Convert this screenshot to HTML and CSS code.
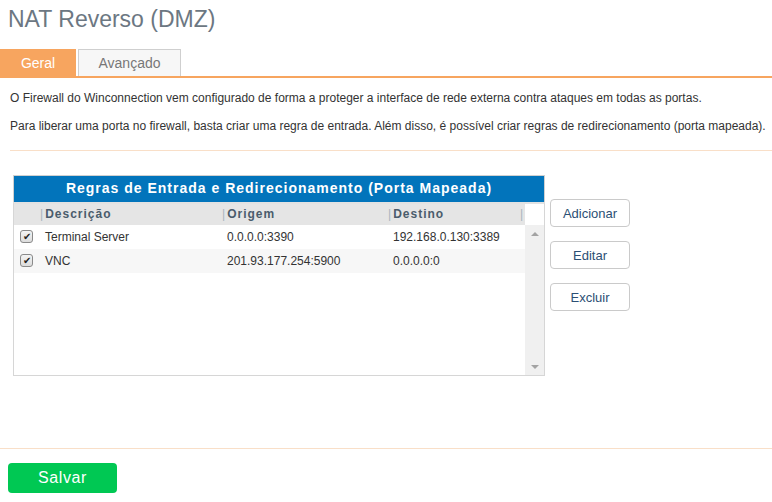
FILE: index.html
```html
<!DOCTYPE html>
<html lang="pt">
<head>
<meta charset="utf-8">
<title>NAT Reverso (DMZ)</title>
<link rel="stylesheet" href="styles.css">
</head>
<body>
<h1 class="title">NAT Reverso (DMZ)</h1>
<div class="tabs">
  <div class="tab active">Geral</div>
  <div class="tab">Avançado</div>
</div>
<div class="content">
  <p class="text">O Firewall do Winconnection vem configurado de forma a proteger a interface de rede externa contra ataques em todas as portas.</p>
  <p class="text">Para liberar uma porta no firewall, basta criar uma regra de entrada. Além disso, é possível criar regras de redirecionamento (porta mapeada).</p>
  <hr class="sep">
  <div class="rules">
    <div class="grid">
      <div class="grid-title">Regras de Entrada e Redirecionamento (Porta Mapeada)</div>
      <div class="grid-box">
        <div class="grid-main">
          <div class="grid-head">
            <div class="c-check"></div>
            <div class="c-desc"><span class="bar">|</span>Descrição</div>
            <div class="c-orig"><span class="bar">|</span>Origem</div>
            <div class="c-dest"><span class="bar">|</span>Destino</div>
            <div class="c-end"><span class="bar">|</span></div>
          </div>
          <div class="grid-body">
            <div class="row">
              <div class="c-check"><span class="chk">&#10004;</span></div>
              <div class="c-desc">Terminal Server</div>
              <div class="c-orig">0.0.0.0:3390</div>
              <div class="c-dest">192.168.0.130:3389</div>
            </div>
            <div class="row alt">
              <div class="c-check"><span class="chk">&#10004;</span></div>
              <div class="c-desc">VNC</div>
              <div class="c-orig">201.93.177.254:5900</div>
              <div class="c-dest">0.0.0.0:0</div>
            </div>
          </div>
        </div>
        <div class="scroll">
          <div class="scroll-head"></div>
          <div class="scroll-track">
            <span class="arrow up"></span>
            <span class="arrow down"></span>
          </div>
        </div>
      </div>
    </div>
    <div class="actions">
      <button class="btn">Adicionar</button>
      <button class="btn">Editar</button>
      <button class="btn">Excluir</button>
    </div>
  </div>
</div>
<hr class="sep bottom">
<div class="footer">
  <button class="save">Salvar</button>
</div>
</body>
</html>
```
FILE: styles.css
```css
* { box-sizing: border-box; }
html, body { margin: 0; padding: 0; background: #fff; }
body {
  font-family: "Liberation Sans", Arial, sans-serif;
  color: #333;
  width: 772px;
  height: 502px;
  overflow: hidden;
}
.title {
  margin: 0;
  padding: 5px 0 0 8px;
  height: 49px;
  font-size: 23px;
  line-height: 28px;
  font-weight: normal;
  color: #6c7782;
}
.tabs {
  display: flex;
  gap: 2px;
  height: 29px;
  border-bottom: 2px solid #f7a55f;
}
.tab {
  width: 103px;
  height: 27px;
  line-height: 27px;
  text-align: center;
  font-size: 14px;
  color: #777;
  background: #f7f7f7;
  border: 1px solid #cfcfcf;
  border-bottom: none;
}
.tab.active {
  width: 76px;
  background: #f7a55f;
  border-color: #f7a55f;
  color: #fff;
}
.content { padding: 0 0 0 10px; }
.text {
  margin: 0;
  font-size: 12px;
  line-height: 14px;
  color: #333;
}
.text:first-child { padding-top: 13px; }
.text + .text { margin-top: 14px; }
.sep {
  margin: 17px 0 0 0;
  border: none;
  height: 1px;
  background: #f9dfc8;
}
.rules {
  display: flex;
  gap: 5px;
  margin-top: 24px;
  padding-left: 3px;
}
.grid { width: 532px; }
.grid-title {
  height: 27px;
  line-height: 25px;
  background: #0274bb;
  border: 1px solid #d0d0d0;
  border-bottom: none;
  color: #fff;
  font-weight: bold;
  font-size: 14px;
  letter-spacing: 1px;
  text-align: center;
}
.grid-box {
  display: flex;
  height: 174px;
  border: 1px solid #d6d6d6;
  border-top: 2px solid #e2e2e2;
}
.grid-main { flex: 1; }
.grid-head {
  display: flex;
  height: 21px;
  line-height: 21px;
  background: #e5e5e5;
  font-size: 12px;
  font-weight: bold;
  color: #4a5c6c;
  letter-spacing: 1px;
}
.bar {
  color: #a9b4be;
  font-weight: normal;
  margin-right: 2px;
  letter-spacing: 0;
}
.c-check { width: 26px; flex: none; padding-left: 6px; display: flex; align-items: center; }
.grid-head .c-check { display: block; }
.c-desc { width: 182px; flex: none; }
.c-orig { width: 166px; flex: none; }
.c-dest { width: 132px; flex: none; }
.c-end { flex: 1; }
.row {
  display: flex;
  height: 24px;
  line-height: 24px;
  font-size: 12px;
  color: #333;
}
.row .c-desc, .row .c-orig, .row .c-dest { padding-left: 5px; }
.row.alt { background: #f7f7f7; }
.chk {
  display: block;
  width: 13px;
  height: 13px;
  margin-top: -1px;
  border: 1px solid #8a8a8a;
  border-radius: 3px;
  background: linear-gradient(#f4f4f4, #dcdcdc);
  font-size: 10px;
  line-height: 12px;
  text-align: center;
  color: #222;
}
.scroll {
  width: 21px;
  display: flex;
  flex-direction: column;
}
.scroll-head { height: 21px; background: #fff; }
.scroll-track {
  flex: 1;
  background: #f0f0f0;
  display: flex;
  flex-direction: column;
  justify-content: space-between;
  align-items: center;
  padding: 7px 0 6px;
}
.arrow {
  width: 0;
  height: 0;
  border-left: 4px solid transparent;
  border-right: 4px solid transparent;
}
.arrow.up { border-bottom: 4px solid #a3a3a3; }
.arrow.down { border-top: 4px solid #a3a3a3; }
.actions {
  display: flex;
  flex-direction: column;
  gap: 14px;
  padding-top: 24px;
}
.btn {
  width: 80px;
  height: 28px;
  background: #fff;
  border: 1px solid #cacaca;
  border-radius: 4px;
  font-family: "Liberation Sans", Arial, sans-serif;
  font-size: 13px;
  color: #2c4f74;
  padding: 0;
}
.sep.bottom { margin-top: 72px; }
.footer { padding: 14px 0 0 8px; }
.save {
  width: 109px;
  height: 30px;
  background: #00c853;
  border: none;
  border-radius: 4px;
  color: #fff;
  font-family: "Liberation Sans", Arial, sans-serif;
  font-size: 16px;
  letter-spacing: 0.6px;
  padding: 0;
}
```
